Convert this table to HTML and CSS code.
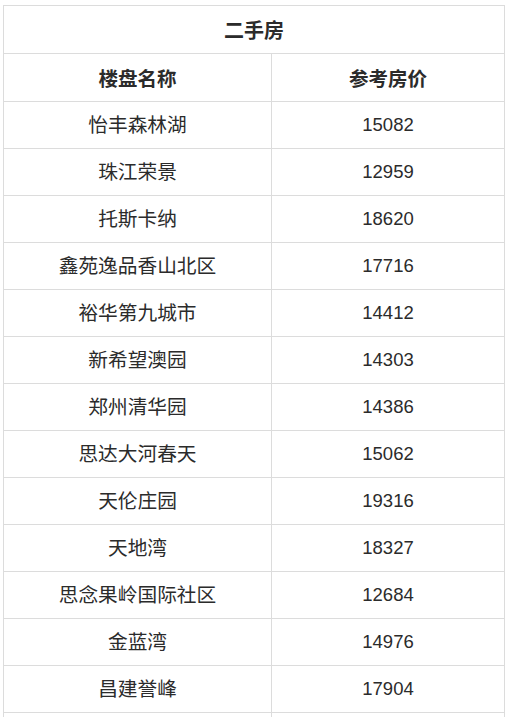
FILE: index.html
```html
<!DOCTYPE html>
<html lang="zh">
<head>
<meta charset="utf-8">
<link rel="stylesheet" href="styles.css">
</head>
<body>
<table class="price-table">
  <colgroup>
    <col class="c-name">
    <col class="c-price">
  </colgroup>
  <thead>
    <tr class="row-title"><th colspan="2" class="title">二手房</th></tr>
    <tr class="row-head"><th class="col-name">楼盘名称</th><th class="col-price">参考房价</th></tr>
  </thead>
  <tbody>
    <tr><td class="name">怡丰森林湖</td><td class="price">15082</td></tr>
    <tr><td class="name">珠江荣景</td><td class="price">12959</td></tr>
    <tr><td class="name">托斯卡纳</td><td class="price">18620</td></tr>
    <tr><td class="name">鑫苑逸品香山北区</td><td class="price">17716</td></tr>
    <tr><td class="name">裕华第九城市</td><td class="price">14412</td></tr>
    <tr><td class="name">新希望澳园</td><td class="price">14303</td></tr>
    <tr><td class="name">郑州清华园</td><td class="price">14386</td></tr>
    <tr><td class="name">思达大河春天</td><td class="price">15062</td></tr>
    <tr><td class="name">天伦庄园</td><td class="price">19316</td></tr>
    <tr><td class="name">天地湾</td><td class="price">18327</td></tr>
    <tr><td class="name">思念果岭国际社区</td><td class="price">12684</td></tr>
    <tr><td class="name">金蓝湾</td><td class="price">14976</td></tr>
    <tr><td class="name">昌建誉峰</td><td class="price">17904</td></tr>
    <tr class="row-more"><td></td><td></td></tr>
  </tbody>
</table>
</body>
</html>
```
FILE: styles.css
```css
html, body {
  margin: 0;
  padding: 0;
  background: #fff;
}
body {
  padding: 5px 0 0 3px;
  font-family: "Liberation Sans", "Noto Sans CJK SC", sans-serif;
  color: #2b2b2b;
}
.price-table {
  border-collapse: collapse;
  width: 501px;
  table-layout: fixed;
}
.c-name {
  width: 268px;
}
.c-price {
  width: 233px;
}
.price-table th,
.price-table td {
  border: 1px solid #dcdcdc;
  text-align: center;
  vertical-align: middle;
  padding: 0;
}
.row-title, .row-head {
  height: 48px;
}
tbody tr {
  height: 47px;
}
.title {
  font-size: 20px;
  font-weight: bold;
  padding-bottom: 2px;
}
.col-name,
.col-price {
  font-size: 19.5px;
  font-weight: bold;
  padding-bottom: 2px;
}
.price-table .name {
  font-size: 19.7px;
  padding-bottom: 3px;
}
.price {
  font-size: 18.5px;
}
```
